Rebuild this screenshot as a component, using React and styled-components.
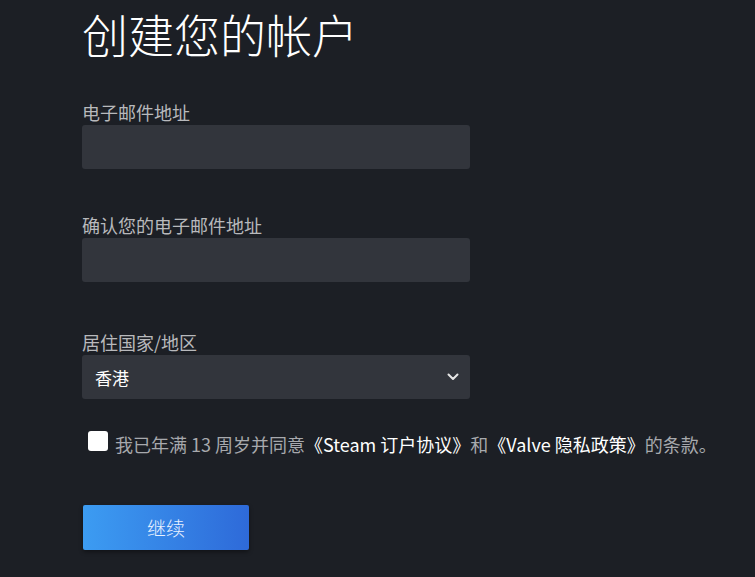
import React, { useState } from "react";
import styled, { createGlobalStyle } from "styled-components";

const GlobalStyle = createGlobalStyle`
  html, body {
    margin: 0;
    padding: 0;
    background: #1c1f25;
  }
  body {
    font-family: "Noto Sans CJK SC", "Noto Sans", sans-serif;
  }
`;

export default function App() {
  const [agreed, setAgreed] = useState(false);

  return (
    <Page>
      <GlobalStyle />
      <Form>
        <Title>创建您的帐户</Title>

        <Field $top={37}>
          <Label>电子邮件地址</Label>
          <Input type="email" />
        </Field>

        <Field $top={44}>
          <Label>确认您的电子邮件地址</Label>
          <Input type="email" />
        </Field>

        <Field $top={48}>
          <Label>居住国家/地区</Label>
          <SelectBox>
            <span>香港</span>
            <Chevron viewBox="0 0 12 8">
              <path d="M1.5 1.5 L6 6 L10.5 1.5" />
            </Chevron>
          </SelectBox>
        </Field>

        <AgreeRow>
          <Check checked={agreed} onClick={() => setAgreed(!agreed)} />
          <AgreeText>
            我已年满 13 周岁并同意<Link>《Steam 订户协议》</Link>和<Link>《Valve 隐私政策》</Link>的条款。
          </AgreeText>
        </AgreeRow>

        <Button>继续</Button>
      </Form>
    </Page>
  );
}

const Page = styled.div`
  width: 755px;
  height: 577px;
  overflow: hidden;
  background: #1c1f25;
`;

const Form = styled.div`
  display: flex;
  flex-direction: column;
  align-items: flex-start;
  padding: 0 0 0 82px;
`;

const Title = styled.h1`
  margin: 3px 0 0 0;
  font-size: 46px;
  line-height: 60px;
  font-weight: 300;
  color: #ffffff;
`;

const Field = styled.div`
  display: flex;
  flex-direction: column;
  margin-top: ${(p) => p.$top}px;
`;

const Label = styled.div`
  font-size: 18px;
  line-height: 24px;
  height: 25px;
  color: #b8b9bc;
`;

const Input = styled.input`
  width: 388px;
  height: 44px;
  box-sizing: border-box;
  border: none;
  outline: none;
  border-radius: 3px;
  background: #32353c;
  color: #fff;
  font-size: 15px;
  padding: 0 12px;
`;

const SelectBox = styled.div`
  width: 388px;
  height: 44px;
  box-sizing: border-box;
  border-radius: 3px;
  background: #32353c;
  color: #ffffff;
  font-size: 17px;
  display: flex;
  align-items: center;
  justify-content: space-between;
  padding: 0 11px 0 13px;
`;

const Chevron = styled.svg`
  width: 12px;
  height: 8px;
  fill: none;
  stroke: #e6e6e6;
  stroke-width: 2;
  stroke-linecap: round;
  stroke-linejoin: round;
`;

const AgreeRow = styled.div`
  display: flex;
  align-items: center;
  gap: 7px;
  margin-top: 33px;
  padding-left: 6px;
`;

const Check = styled.div`
  width: 20px;
  height: 20px;
  border-radius: 3px;
  background: #ffffff;
  flex-shrink: 0;
  margin-top: -6px;
`;

const AgreeText = styled.div`
  font-size: 18px;
  line-height: 24px;
  color: #a7a9ad;
  white-space: nowrap;
`;

const Link = styled.span`
  color: #ffffff;
`;

const Button = styled.button`
  margin: 49px 0 0 1px;
  width: 166px;
  height: 45px;
  border: none;
  border-radius: 2px;
  background: linear-gradient(90deg, #3c9cf2 0%, #2e6ad9 100%);
  color: #e8f1ff;
  font-family: "Noto Sans CJK SC", sans-serif;
  font-size: 19px;
  font-weight: 300;
  box-shadow: 0 2px 4px rgba(0, 0, 0, 0.4);
  cursor: pointer;
`;
